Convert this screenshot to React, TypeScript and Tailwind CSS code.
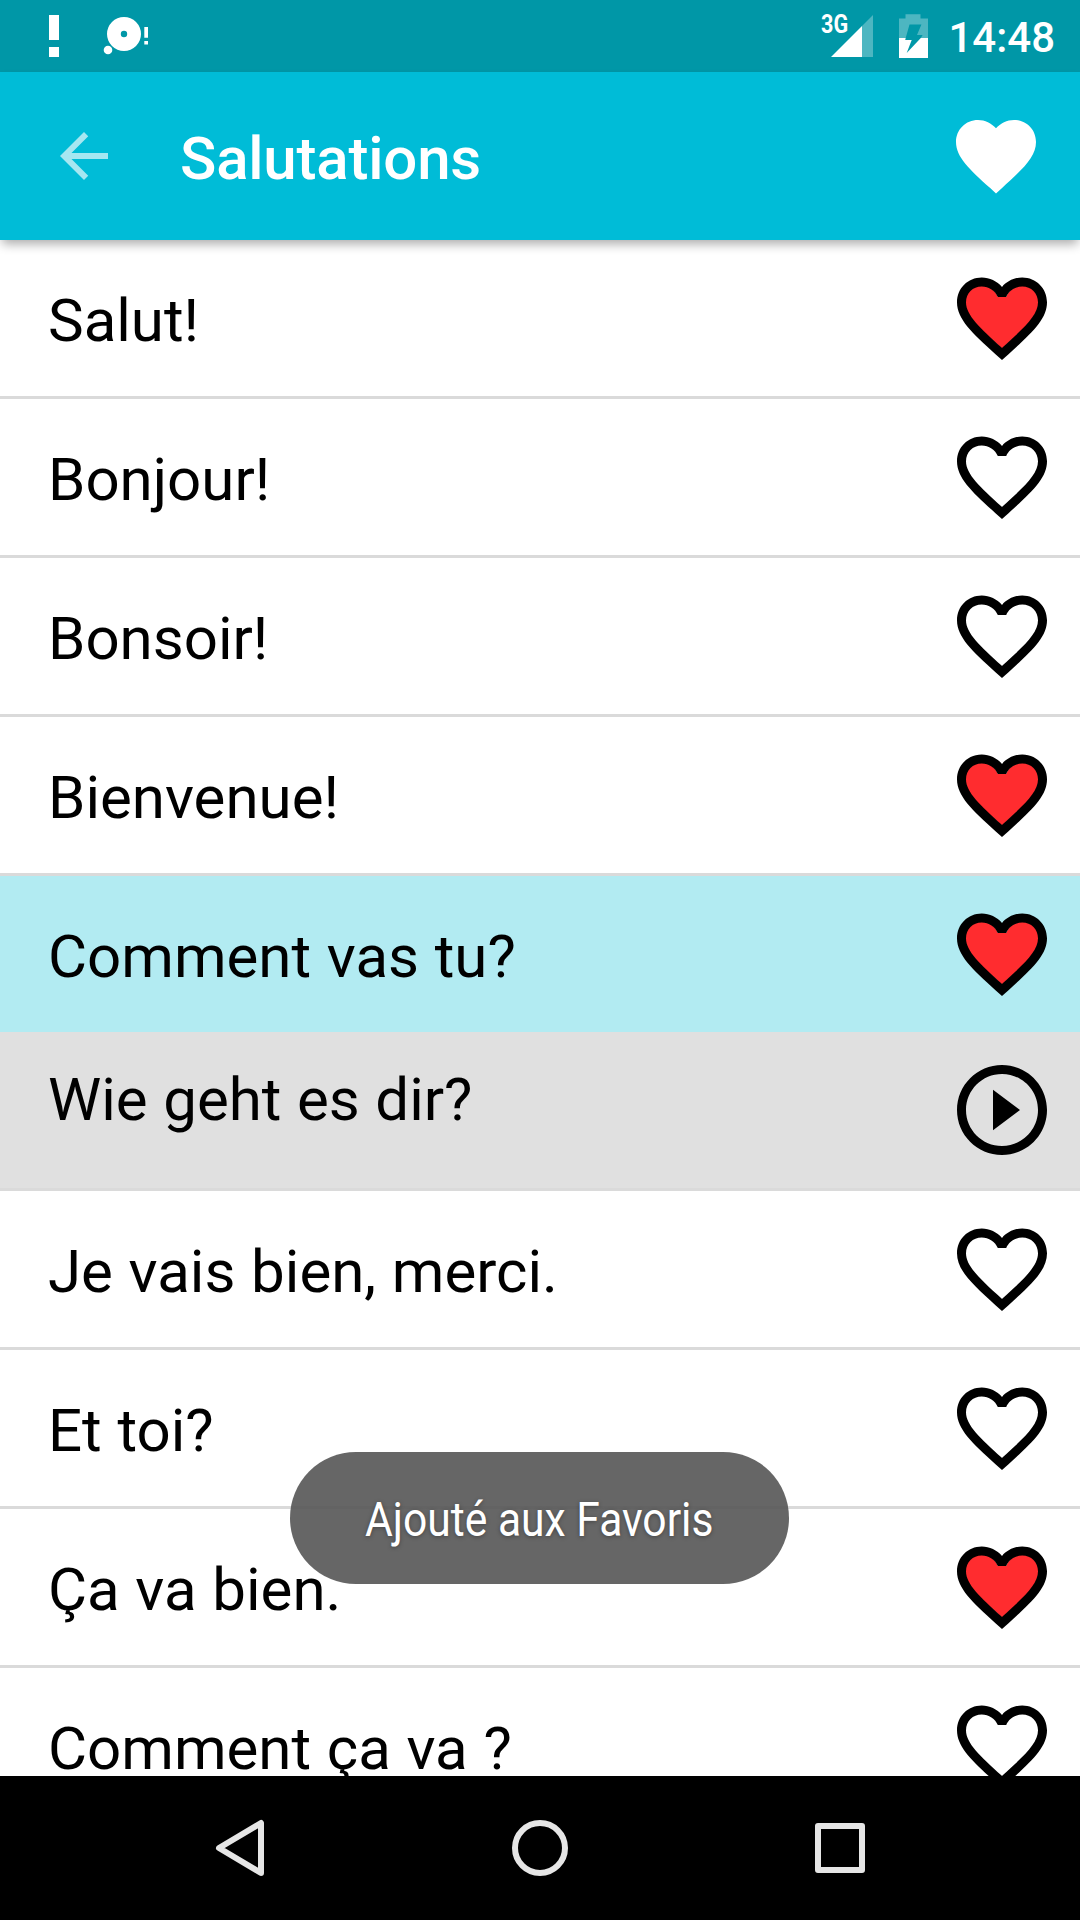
import React, { useState } from "react";

interface Phrase {
  text: string;
  favorite: boolean;
  translation?: string;
}

const initialPhrases: Phrase[] = [
  { text: "Salut!", favorite: true },
  { text: "Bonjour!", favorite: false },
  { text: "Bonsoir!", favorite: false },
  { text: "Bienvenue!", favorite: true },
  { text: "Comment vas tu?", favorite: true, translation: "Wie geht es dir?" },
  { text: "Je vais bien, merci.", favorite: false },
  { text: "Et toi?", favorite: false },
  { text: "Ça va bien.", favorite: true },
  { text: "Comment ça va ?", favorite: false },
];

const HEART =
  "M12 21.35l-1.45-1.32C5.4 15.36 2 12.28 2 8.5 2 5.42 4.42 3 7.5 3c1.74 0 3.41.81 4.5 2.09C13.09 3.81 14.76 3 16.5 3 19.58 3 22 5.42 22 8.5c0 3.78-3.4 6.86-8.55 11.54z";
const HEART_BORDER =
  "M16.5 3c-1.74 0-3.41.81-4.5 2.09C10.91 3.81 9.24 3 7.5 3 4.42 3 2 5.42 2 8.5c0 3.78 3.4 6.86 8.55 11.54L12 21.35l1.45-1.32C18.6 15.36 22 12.28 22 8.5 22 5.42 19.58 3 16.5 3zm-4.4 15.55l-.1.1-.1-.1C7.14 14.24 4 11.39 4 8.5 4 6.5 5.5 5 7.5 5c1.54 0 3.04.99 3.57 2.36h1.87C13.46 5.99 14.96 5 16.5 5c2 0 3.5 1.5 3.5 3.5 0 2.89-3.14 5.74-7.9 10.05z";
const HEART_INNER =
  "M12.1 18.7l-.1.1-.1-.1C7 14.3 3.85 11.5 3.85 8.5 3.85 6.4 5.4 4.85 7.5 4.85c1.54 0 3.04.99 3.57 2.5h1.87C13.46 5.85 14.96 4.85 16.5 4.85c2.1 0 3.65 1.55 3.65 3.65 0 3-3.15 5.8-8.05 10.2z";

const StatusBar = () => (
  <div className="flex h-[72px] shrink-0 items-center justify-between bg-[#0097a7] pr-[25px] pl-[49px] text-white">
    <div className="flex items-center">
      <svg width="10" height="72" viewBox="0 0 10 72" fill="currentColor">
        <path d="M0 15h10v25H0zM0 47h10v10H0z" />
      </svg>
      <svg className="ml-[41px]" width="50" height="72" viewBox="100 0 50 72" fill="currentColor">
        <path
          fillRule="evenodd"
          d="M124 17a17 17 0 1 1 0 34a17 17 0 1 1 0-34zm0 13.8a3.2 3.2 0 1 0 0 6.4a3.2 3.2 0 1 0 0-6.4z"
        />
        <circle cx="108" cy="50" r="4.3" />
        <path d="M144.3 27h3.7v10.7h-3.7zM144.3 41h3.7v3.4h-3.7z" />
      </svg>
    </div>
    <div className="flex h-full items-center">
      <span className="mt-[-24px] w-[10px] origin-left scale-x-[0.83] text-[26px] leading-none font-bold whitespace-nowrap">
        3G
      </span>
      <svg width="43" height="72" viewBox="832 0 43 72" fill="currentColor">
        <path d="M832 57L863 26V57z" />
        <path d="M863 26L874 15V57H863z" opacity="0.3" />
      </svg>
      <svg className="ml-[25px]" width="29" height="72" viewBox="899 0 29 72" fill="currentColor">
        <path
          d="M905.5 14.3H920.5V18.5H928V38H920.8L922.6 35H917L921.4 24.5H909.5L905.7 38H899V18.5H905.5z"
          opacity="0.3"
        />
        <path d="M899 38H905.7L905.2 40H911.7L906.7 53L920.8 38H928V58H899z" />
      </svg>
      <span className="mt-[3px] ml-5 text-[42px] leading-none font-medium">14:48</span>
    </div>
  </div>
);

const Toolbar = () => (
  <header className="relative z-10 flex h-[168px] shrink-0 items-center bg-[#00bcd7] pr-9 pl-12 text-white shadow-[0_6px_10px_-2px_rgba(0,0,0,0.33)]">
    <svg className="opacity-65" width="72" height="72" viewBox="0 0 24 24" fill="currentColor">
      <path d="M20 11H7.83l5.59-5.59L12 4l-8 8 8 8 1.41-1.41L7.83 13H20v-2z" />
    </svg>
    <h1 className="mt-[6px] ml-[60px] flex-1 text-[60px] leading-[70px] font-medium tracking-[-0.2px]">
      Salutations
    </h1>
    <svg width="96" height="96" viewBox="0 0 24 24" fill="currentColor">
      <path d={HEART} />
    </svg>
  </header>
);

interface PhraseRowProps {
  phrase: Phrase;
  onToggle: () => void;
}

const PhraseRow: React.FC<PhraseRowProps> = ({ phrase, onToggle }) => (
  <>
    <li
      className={`flex h-[156px] shrink-0 items-center pr-6 pl-12 ${phrase.translation ? "bg-[#b2ebf2]" : "bg-white"}`}
    >
      <span className="mt-[5px] flex-1 text-[60px] leading-[70px] [word-spacing:0.8px]">{phrase.text}</span>
      <button onClick={onToggle}>
        <svg width="108" height="108" viewBox="0 0 24 24">
          {phrase.favorite && <path d={HEART_INNER} fill="#ff2c2f" />}
          <path d={HEART_BORDER} />
        </svg>
      </button>
    </li>
    {/* Translation panel under the selected phrase */}
    {phrase.translation ? (
      <li className="flex h-[159px] shrink-0 border-b-[3px] border-[#dadada] bg-[#e0e0e0] pt-6 pr-6 pl-12">
        <span className="mt-[9px] flex-1 text-[60px] leading-[70px] [word-spacing:0.7px]">
          {phrase.translation}
        </span>
        <svg width="108" height="108" viewBox="0 0 24 24">
          <path d="M10 16.5l6-4.5-6-4.5v9zM12 2C6.48 2 2 6.48 2 12s4.48 10 10 10 10-4.48 10-10S17.52 2 12 2zm0 18c-4.41 0-8-3.59-8-8s3.59-8 8-8 8 3.59 8 8-3.59 8-8 8z" />
        </svg>
      </li>
    ) : (
      <li className="h-[3px] shrink-0 bg-[#dadada]" />
    )}
  </>
);

const NavigationBar = () => (
  <nav className="flex h-36 shrink-0 items-center justify-center gap-[216px] bg-black">
    <svg width="84" height="84" viewBox="0 0 84 84" fill="none" stroke="#e6e6e6" strokeWidth="6">
      <path d="M21 42L63 17V67z" strokeLinejoin="round" />
    </svg>
    <svg width="84" height="84" viewBox="0 0 84 84" fill="none" stroke="#e6e6e6" strokeWidth="6">
      <circle cx="42" cy="42" r="25" />
    </svg>
    <svg width="84" height="84" viewBox="0 0 84 84" fill="none" stroke="#e6e6e6" strokeWidth="6">
      <rect x="20" y="20" width="44" height="44" strokeLinejoin="round" />
    </svg>
  </nav>
);

const App: React.FC = () => {
  const [phrases, setPhrases] = useState(initialPhrases);

  const toggleFavorite = (index: number) => {
    setPhrases(phrases.map((p, i) => (i === index ? { ...p, favorite: !p.favorite } : p)));
  };

  return (
    <div className="relative flex h-[1920px] w-[1080px] flex-col overflow-hidden bg-white font-['Roboto',sans-serif] text-black">
      <StatusBar />
      <Toolbar />
      <ul className="flex min-h-0 flex-1 flex-col overflow-hidden">
        {phrases.map((phrase, index) => (
          <PhraseRow key={phrase.text} phrase={phrase} onToggle={() => toggleFavorite(index)} />
        ))}
      </ul>
      <NavigationBar />

      {/* Toast */}
      <div className="absolute top-[1452px] left-[290px] z-20 flex h-[132px] w-[499px] items-center justify-center rounded-full bg-[#555555]/90">
        <span className="mt-1 scale-x-[0.888] text-[48px] leading-[56px] whitespace-nowrap text-white [text-shadow:0_1px_5px_rgba(0,0,0,0.35)]">
          Ajouté aux Favoris
        </span>
      </div>
    </div>
  );
};

export default App;
